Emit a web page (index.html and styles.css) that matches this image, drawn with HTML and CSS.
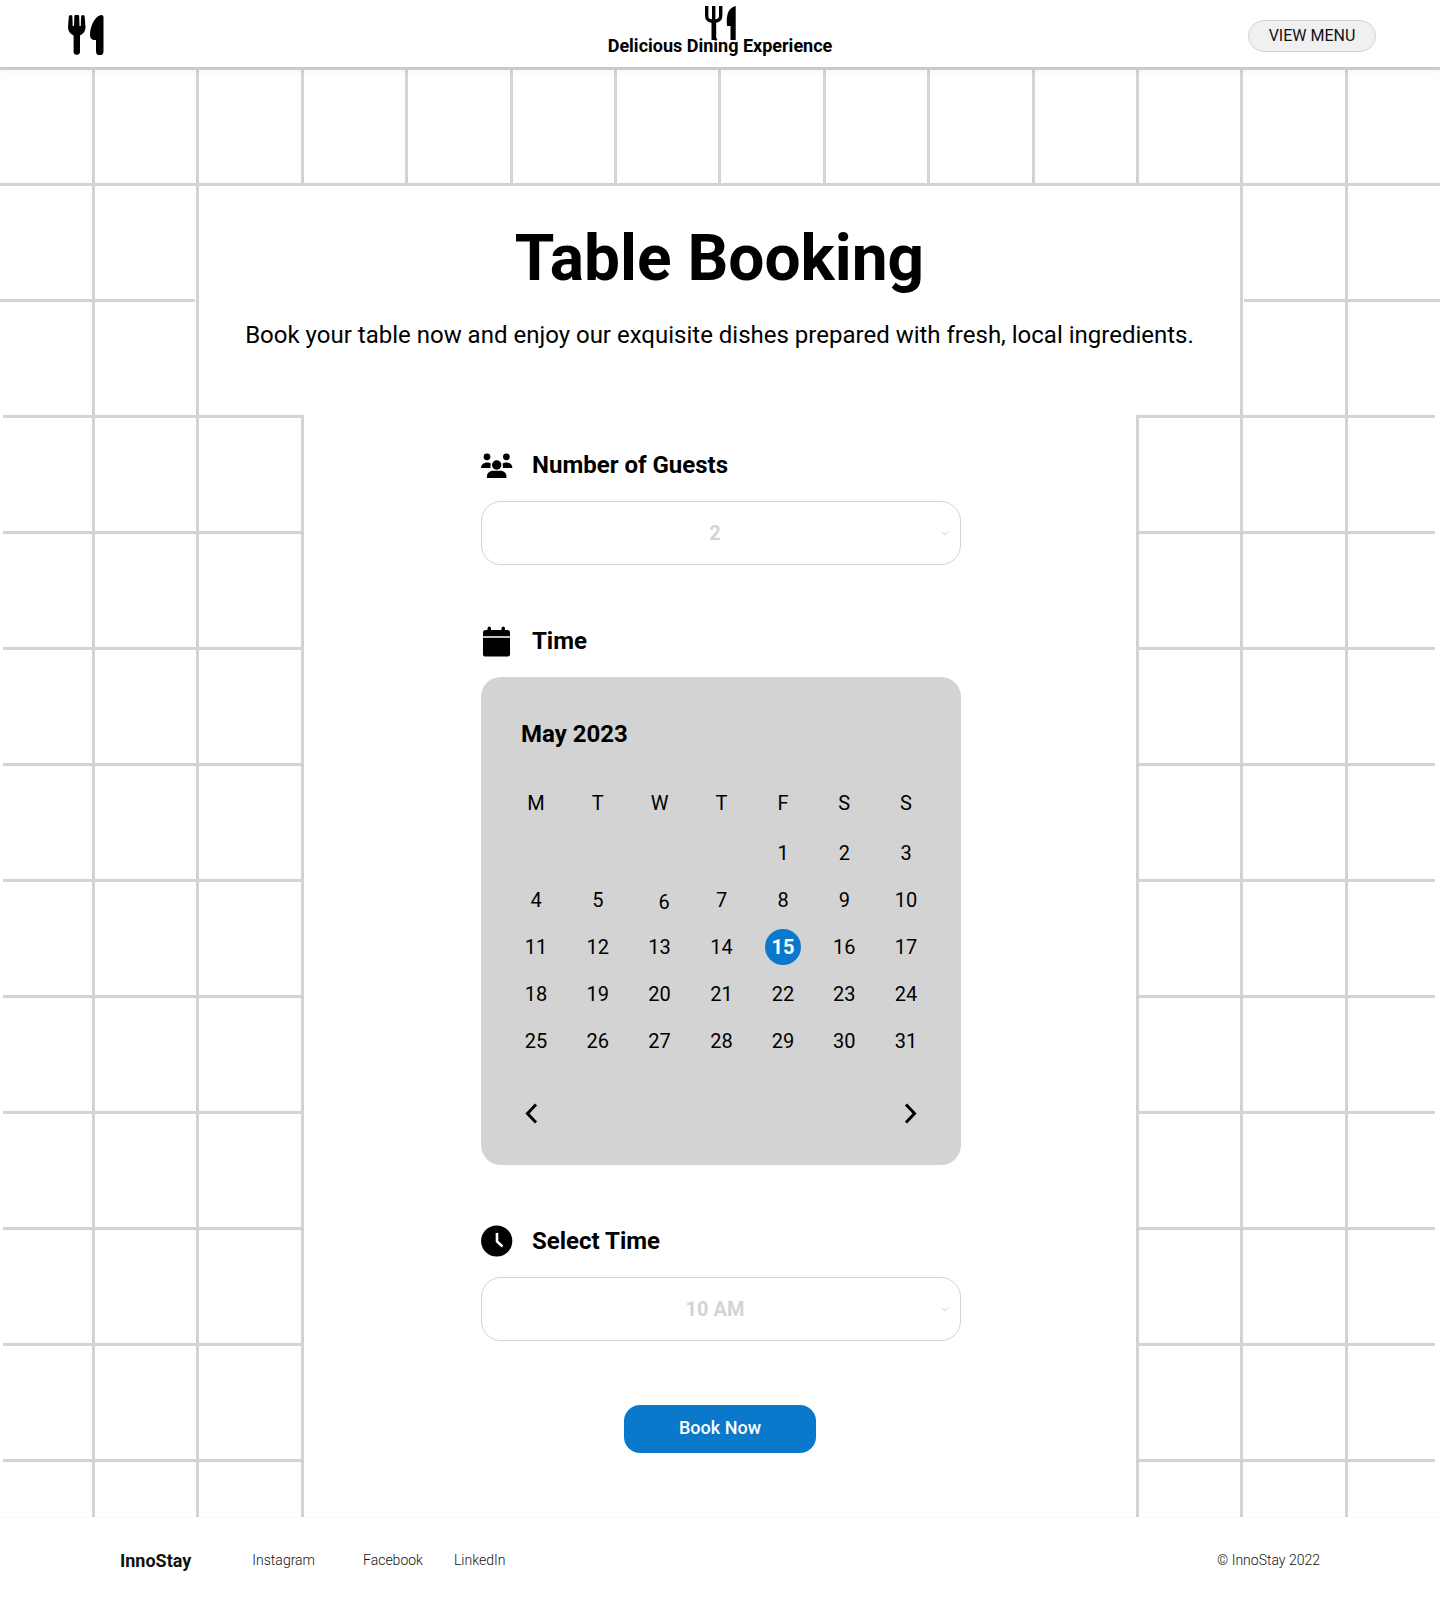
FILE: index.html
```html
<!DOCTYPE html>
<html lang="en">
<head>
<meta charset="utf-8">
<title>Table Booking</title>
<link rel="stylesheet" href="styles.css">
</head>
<body>
<header class="site-header">
  <svg class="logo-left" viewBox="0 0 36 40" aria-hidden="true">
    <path d="M0 12 L.8 1.8 A1.8 1.8 0 0 1 4.4 1.8 L4.7 11 H6 L6.3 1.8 A2.4 2.4 0 0 1 11.2 1.8 L11.5 11 H12.8 L13.1 1.8 A1.8 1.8 0 0 1 16.7 1.8 L17.5 12 C17.5 16 15.5 19 12 20.5 V36.5 A3.2 3.2 0 0 1 5.6 36.5 V20.5 C2 19 0 16 0 12Z"/>
    <path d="M33.5 0 A2 2 0 0 1 35.5 2 V36.5 A3.7 3.7 0 0 1 28 36.5 V25 H25.5 Q22 24 22 20 C22 10 28 0 33.5 0Z"/>
  </svg>
  <div class="brand">
    <svg class="logo-center" viewBox="0 0 32 36" aria-hidden="true">
      <path class="fork" d="M2.7 1v10a5 5 0 0 0 5 5h4a5 5 0 0 0 5-5V1"/>
      <path class="fork" d="M9.7 1v15"/>
      <path d="M7.5 15 H12.2 V35 H7.5Z"/>
      <path d="M31.7 1 V35 H26.5 V21 H23 Q22 12 24.5 6.5 Q27 2 31.7 1Z"/>
    </svg>
    <div class="brand-name">Delicious Dining Experience</div>
  </div>
  <button class="menu-btn" type="button">VIEW MENU</button>
</header>

<main class="canvas">
  <section class="hero">
    <h1>Table Booking</h1>
    <p>Book your table now and enjoy our exquisite dishes prepared with fresh, local ingredients.</p>
  </section>

  <div class="stage">
    <form class="panel">
      <div class="inner">
        <div class="group">
          <label class="field-label">
            <svg class="ico" viewBox="0 0 32 32" aria-hidden="true">
              <circle cx="6" cy="7.8" r="3.4"/><circle cx="25.4" cy="7.8" r="3.4"/><circle cx="15.7" cy="16" r="4.7"/>
              <path d="M0 19 C0 15.5 3 13.4 6 13.4 C7.6 13.4 9 13.9 10 14.8 C9.5 16 9.3 17.5 9.6 19Z"/>
              <path d="M31.4 19 C31.4 15.5 28.4 13.4 25.4 13.4 C23.8 13.4 22.4 13.9 21.4 14.8 C21.9 16 22.1 17.5 21.8 19Z"/>
              <path d="M6 29 V27 C6 24 9 21.8 12 21.8 H19.4 C22.4 21.8 25.4 24 25.4 27 V29Z"/>
            </svg>
            <span>Number of Guests</span>
          </label>
          <div class="picker-wrap">
            <select class="picker"><option>2</option><option>4</option><option>6</option></select>
            <svg class="picker-arrow" viewBox="0 0 8 5" aria-hidden="true"><path d="M.5 .5 L4 4 L7.5 .5"/></svg>
          </div>
        </div>

        <div class="group">
          <div class="field-label">
            <svg class="ico" viewBox="0 0 32 32" aria-hidden="true">
              <path d="M6.5 5 V3.2 a1.75 1.75 0 0 1 3.5 0 V5 H20.5 V3.2 a1.75 1.75 0 0 1 3.5 0 V5 H26.5 a2.5 2.5 0 0 1 2.5 2.5 V11.2 H2 V7.5 a2.5 2.5 0 0 1 2.5-2.5Z"/>
              <path d="M2 12.8 H29 V29.5 a2 2 0 0 1 -2 2 H4 a2 2 0 0 1 -2-2Z"/>
            </svg>
            <span>Time</span>
          </div>
          <div class="calendar">
            <div class="month">May 2023</div>
            <div class="days">
              <div class="dow">M</div><div class="dow">T</div><div class="dow">W</div><div class="dow">T</div><div class="dow">F</div><div class="dow">S</div><div class="dow">S</div>
              <div></div><div></div><div></div><div></div><div class="day">1</div><div class="day">2</div><div class="day">3</div>
              <div class="day">4</div><div class="day">5</div><div class="day shifted">6</div><div class="day">7</div><div class="day">8</div><div class="day">9</div><div class="day">10</div>
              <div class="day">11</div><div class="day">12</div><div class="day">13</div><div class="day">14</div><div class="day"><span class="today">15</span></div><div class="day">16</div><div class="day">17</div>
              <div class="day">18</div><div class="day">19</div><div class="day">20</div><div class="day">21</div><div class="day">22</div><div class="day">23</div><div class="day">24</div>
              <div class="day">25</div><div class="day">26</div><div class="day">27</div><div class="day">28</div><div class="day">29</div><div class="day">30</div><div class="day">31</div>
            </div>
            <div class="cal-nav">
              <svg class="chev" viewBox="0 0 13 21" aria-hidden="true"><path d="M11 1.5 L2.5 10.5 L11 19.5"/></svg>
              <svg class="chev" viewBox="0 0 13 21" aria-hidden="true"><path d="M2 1.5 L10.5 10.5 L2 19.5"/></svg>
            </div>
          </div>
        </div>

        <div class="group last">
          <label class="field-label">
            <svg class="ico" viewBox="0 0 32 32" aria-hidden="true">
              <circle cx="15.7" cy="16" r="15.6"/>
              <path class="hand" d="M16 8 V16.5 L21.5 21.5"/>
            </svg>
            <span>Select Time</span>
          </label>
          <div class="picker-wrap">
            <select class="picker"><option>10 AM</option><option>11 AM</option><option>12 PM</option></select>
            <svg class="picker-arrow" viewBox="0 0 8 5" aria-hidden="true"><path d="M.5 .5 L4 4 L7.5 .5"/></svg>
          </div>
        </div>

        <button class="book" type="button">Book Now</button>
      </div>
    </form>
  </div>
</main>

<footer class="site-footer">
  <div class="foot-name">InnoStay</div>
  <a class="foot-link l1">Instagram</a>
  <a class="foot-link l2">Facebook</a>
  <a class="foot-link l3">LinkedIn</a>
  <div class="foot-copy">© InnoStay 2022</div>
</footer>
</body>
</html>
```
FILE: styles.css
```css
* { box-sizing: border-box; }
html, body { margin: 0; padding: 0; }
body { font-family: Roboto, "Liberation Sans", sans-serif; color: #000; background: #fff; width: 1440px; }

.site-header {
  position: relative;
  z-index: 1;
  display: grid;
  grid-template-columns: 1fr auto 1fr;
  align-items: start;
  height: 67px;
  padding: 0 64px;
  background: #fff;
  box-shadow: 0 4px 5px rgba(0, 0, 0, .05);
}
.logo-left { display: block; width: 36px; height: 40px; margin: 15px 0 0 4px; fill: #000; }
.brand { display: flex; flex-direction: column; align-items: center; padding-top: 5px; }
.logo-center { display: block; width: 32px; height: 36px; fill: #000; }
.logo-center .fork { fill: none; stroke: #000; stroke-width: 3.4; }
.brand-name { margin-top: -6px; font-size: 18px; font-weight: 700; line-height: 22px; white-space: nowrap; position: relative; }
.menu-btn {
  justify-self: end;
  width: 128px;
  height: 32px;
  margin-top: 20px;
  padding: 0;
  border: 1px solid #d3d3d3;
  border-radius: 16px;
  background: #f0f0f0;
  color: #111;
  font: 400 16px/1 Roboto, sans-serif;
}

.canvas {
  height: 1450px;
  padding-top: 119px;
  background-color: #fff;
  background-image:
    repeating-linear-gradient(90deg, transparent 0, transparent 92px, #d3d3d3 92px, #d3d3d3 95px, transparent 95px, transparent 104.4px),
    repeating-linear-gradient(180deg, #d3d3d3 0, #d3d3d3 3px, transparent 3px, transparent 116px);
}

.hero {
  width: 1047px;
  height: 229px;
  margin-left: 196px;
  padding-top: 37px;
  border-left: 3px solid #d3d3d3;
  border-right: 3px solid #d3d3d3;
  background: #fff;
  box-shadow: -1px 0 #fff, 1px 0 #fff;
  text-align: center;
}
.hero h1 { margin: 0; font-size: 64px; font-weight: 700; line-height: 72px; }
.hero p { margin: 24px 0 0; font-size: 24px; font-weight: 400; line-height: 32px; white-space: nowrap; }

.stage {
  height: 1102px;
  border-left: 3px solid #fff;
  border-right: 5px solid #fff;
}
.panel { width: 832px; height: 100%; margin-left: 301px; padding: 34px 0 0 177px; background: #fff; }
.inner { width: 480px; }

.group { margin-bottom: 60px; }
.group.last { margin-bottom: 64px; }
.field-label { display: flex; align-items: center; gap: 19px; height: 32px; margin-bottom: 20px; font-size: 24px; font-weight: 700; line-height: 32px; }
.ico { display: block; flex: none; width: 32px; height: 32px; fill: #000; }
.ico .hand { fill: none; stroke: #fff; stroke-width: 2.6; }

.picker-wrap { position: relative; }
.picker {
  display: block;
  width: 100%;
  height: 64px;
  padding: 0 29px 0 17px;
  border: 1px solid #d3d3d3;
  border-radius: 20px;
  background-color: #fff;
  color: #d3d3d3;
  font: 700 20px Roboto, sans-serif;
  text-align: center;
  appearance: none;
}
.picker-arrow {
  position: absolute;
  top: 30px;
  right: 12px;
  width: 8px;
  height: 5px;
  fill: none;
  stroke: #d3d3d3;
  stroke-width: 1;
  pointer-events: none;
}

.calendar { height: 488px; padding: 41px 24px 0; border-radius: 20px; background: #d3d3d3; }
.month { padding-left: 16px; margin-bottom: 29px; font-size: 24px; font-weight: 700; line-height: 32px; }
.days {
  display: grid;
  grid-template-columns: 62px 61.5px 62px 62px 61px 61.5px 62px;
  grid-template-rows: 50px repeat(5, 47px);
  font-size: 20px;
  line-height: 24px;
}
.dow { display: flex; align-items: center; justify-content: center; height: 48px; }
.day { display: flex; align-items: center; justify-content: center; }
.day.shifted { padding: 4px 0 0 9px; }
.today {
  display: flex; align-items: center; justify-content: center;
  width: 36px; height: 36px;
  border-radius: 50%;
  background: #0a79cc;
  color: #fff;
  font-weight: 700;
}
.cal-nav { display: flex; justify-content: space-between; margin-top: 39px; padding: 0 20px; }
.chev { display: block; width: 13px; height: 21px; fill: none; stroke: #000; stroke-width: 3; }

.book {
  display: block;
  width: 192px;
  height: 48px;
  margin-left: 143px;
  padding: 0 0 2px;
  border: 0;
  border-radius: 16px;
  background: #0a79cc;
  color: #fff;
  font: 500 18px/1 Roboto, sans-serif;
}

.site-footer {
  display: flex;
  align-items: center;
  height: 87px;
  padding: 0 120px 2px;
  border-top: 1px solid #f8f8f8;
  background: #fff;
}
.foot-name { font-size: 18px; font-weight: 700; color: #111; }
.foot-link { font-size: 14px; font-weight: 300; color: #111; }
.l1 { margin-left: 61px; }
.l2 { margin-left: 48px; }
.l3 { margin-left: 31px; }
.foot-copy { margin-left: auto; font-size: 14px; font-weight: 300; color: #111; }
```
